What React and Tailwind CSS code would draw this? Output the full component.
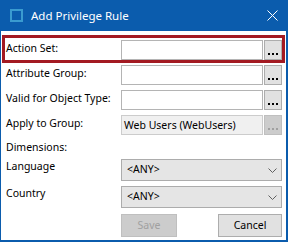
import React from 'react';

const font = { fontFamily: '"Noto Sans", "Open Sans", sans-serif' };

const Dots = ({ disabled }) => (
  <div className="flex gap-[2px] pt-[12px]">
    {[0, 1, 2].map((i) => (
      <span key={i} className={`block w-[2px] h-[2px] ${disabled ? 'bg-[#a0a0a0]' : 'bg-black'}`} />
    ))}
  </div>
);

const BrowseButton = ({ disabled }) => (
  <div
    className={`w-[18px] h-[20px] ml-[1px] flex justify-center border ${
      disabled ? 'bg-[#cccccc] border-[#bfbfbf]' : 'bg-[#e1e1e1] border-[#adadad]'
    }`}
  >
    <Dots disabled={disabled} />
  </div>
);

const FieldRow = ({ label, value, disabled }) => (
  <div className="flex items-start">
    <div className="w-[116px] pl-[1px] text-[10.5px] leading-[16px] text-black whitespace-nowrap">{label}</div>
    <div
      className={`w-[142px] h-[20px] border px-[2px] text-[10.5px] leading-[18px] text-black whitespace-nowrap ${
        disabled ? 'bg-[#f0f0f0] border-[#cccccc]' : 'bg-white border-[#b4b4b4]'
      }`}
    >
      {value}
    </div>
    <BrowseButton disabled={disabled} />
  </div>
);

const Chevron = () => (
  <svg width="9" height="5" viewBox="0 0 9 5" className="block">
    <path d="M0.5 0.5 L4.5 4.5 L8.5 0.5" fill="none" stroke="#606060" strokeWidth="1" />
  </svg>
);

const SelectRow = ({ label }) => (
  <div className="flex items-start">
    <div className="w-[116px] pl-[1px] -mt-[1px] text-[10.5px] leading-[16px] text-black">{label}</div>
    <div className="w-[161px] h-[22px] border border-[#acacac] bg-[#e5e5e5] flex items-center justify-between pl-[5px] pr-[4px] text-[10.5px] text-black">
      <span>&lt;ANY&gt;</span>
      <Chevron />
    </div>
  </div>
);

const App = () => {
  return (
    <div className="w-[288px] h-[242px] bg-white overflow-hidden" style={font}>
      <div className="w-[288px] h-[242px] flex flex-col border-l border-r-2 border-b-2 border-[#0b5cad]">
        {/* Title bar */}
        <div className="h-[31px] -ml-[1px] -mr-[2px] bg-[#0b5cad] flex items-center shrink-0">
          <div className="ml-[10px] w-[13px] h-[13px] border-2 border-[#3a9bd0]" />
          <span className="ml-[8px] text-white text-[11.5px] leading-[16px]">Add Privilege Rule</span>
          <svg width="11" height="11" viewBox="0 0 11 11" className="ml-auto mr-[10px]">
            <path d="M0.5 0.5 L10.5 10.5 M10.5 0.5 L0.5 10.5" stroke="white" strokeWidth="1" />
          </svg>
        </div>

        <div className="pt-[4px]">
          {/* Highlighted row */}
          <div className="ml-[1px] w-[283px] border-[3px] border-[#a31a22] pt-[2px]">
            <FieldRow label="Action Set:" />
          </div>

          <div className="pl-[4px] flex flex-col gap-[5px] mt-[2px]">
            <FieldRow label="Attribute Group:" />
            <FieldRow label="Valid for Object Type:" />
            <FieldRow label="Apply to Group:" value="Web Users (WebUsers)" disabled />
          </div>

          <div className="pl-[5px] mt-[4px] text-[10.5px] leading-[16px] text-black">Dimensions:</div>

          <div className="pl-[4px] flex flex-col gap-[5px] mt-[4px]">
            <SelectRow label="Language" />
            <SelectRow label="Country" />
          </div>

          <div className="flex mt-[6px] pl-[120px]">
            <div className="w-[56px] h-[23px] border border-[#bfbfbf] bg-[#cccccc] flex items-center justify-center text-[10.5px] text-[#a0a0a0]">
              Save
            </div>
            <div className="ml-[41px] w-[64px] h-[23px] border border-[#adadad] bg-[#e1e1e1] flex items-center justify-center text-[10.5px] text-black">
              Cancel
            </div>
          </div>
        </div>
      </div>
    </div>
  );
};

export default App;
